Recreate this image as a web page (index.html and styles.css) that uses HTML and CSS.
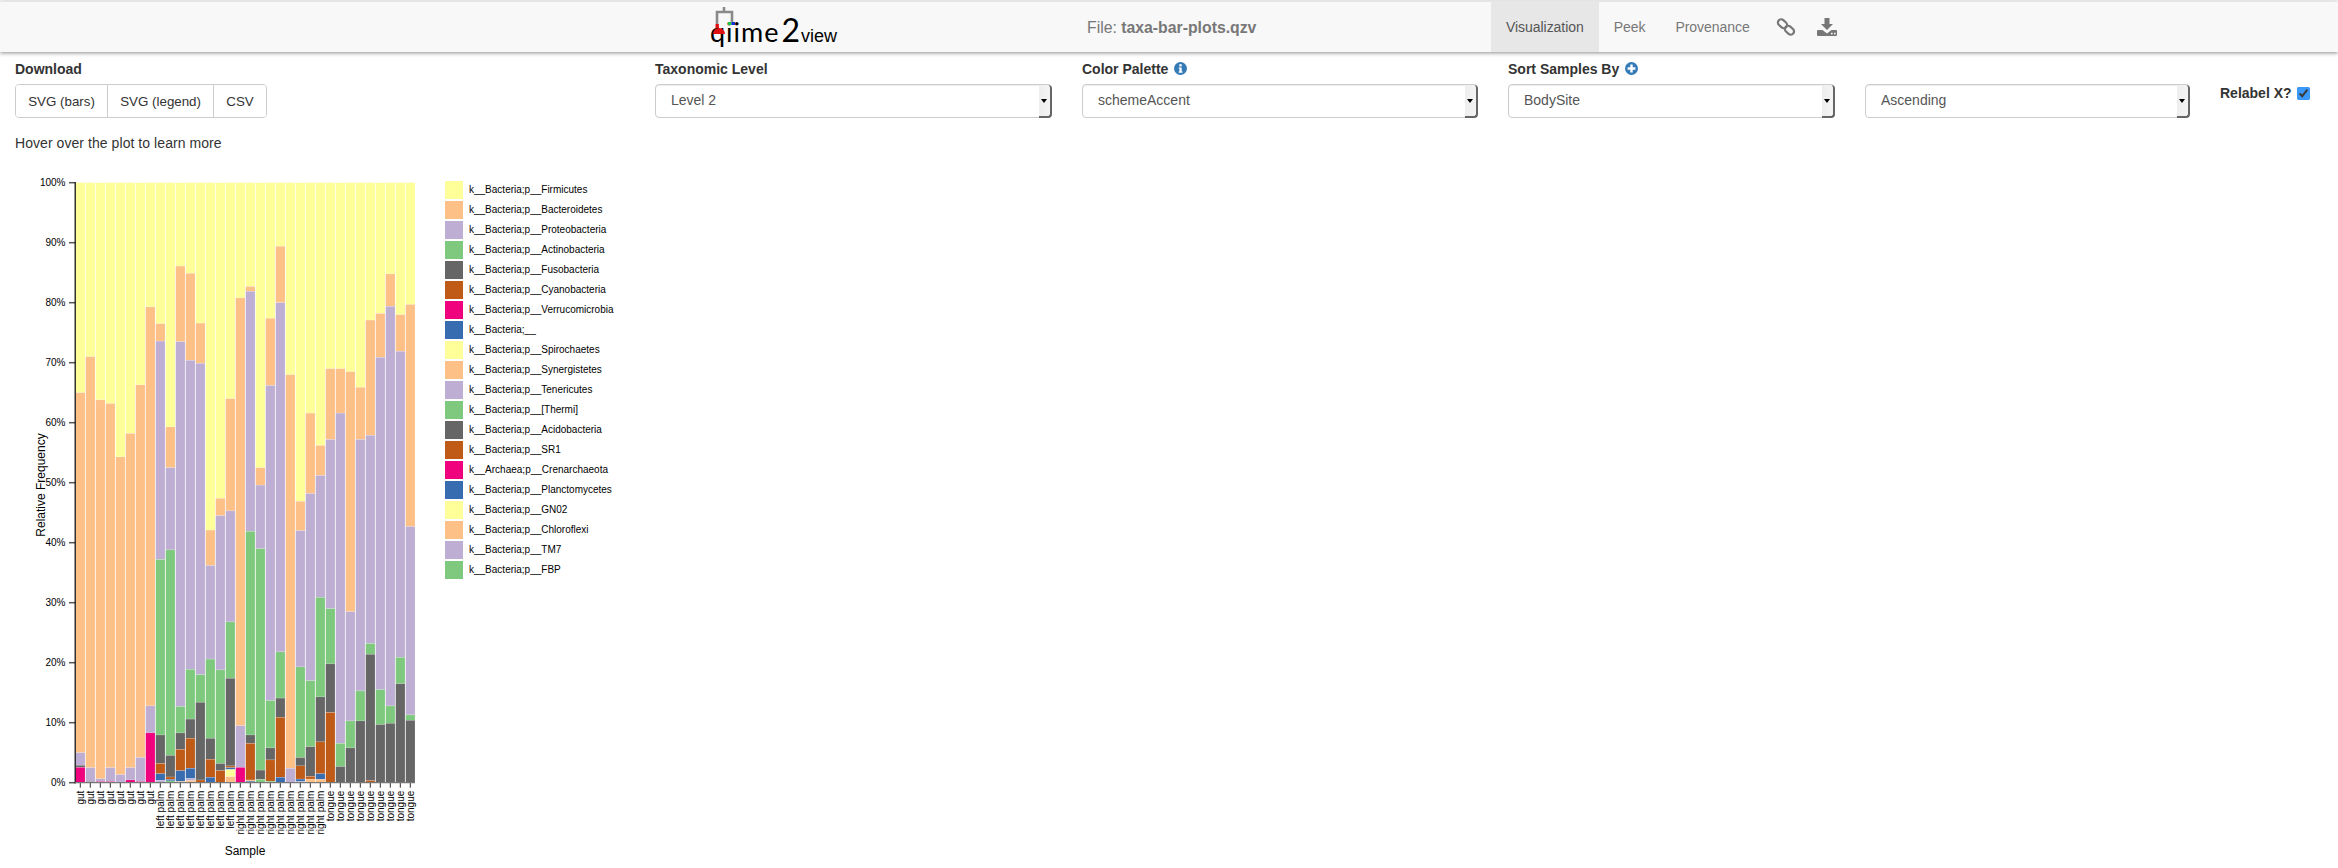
FILE: index.html
```html
<!DOCTYPE html>
<html lang="en">
<head>
    <meta charset="UTF-8">
    <title>taxa-bar-plots.qzv</title>
    <link rel="stylesheet" href="styles.css">
</head>
<body>
    <div class="navbar">
        <a class="brand" href="#">
            <span class="brand-name">qiime</span><span class="brand-two">2</span><span class="brand-view">view</span>
            <svg class="brand-tree" width="40" height="36" viewBox="0 0 40 36">
                <path d="M15 3V8M8 20V8H23V18" fill="none" stroke="#8a8a8a" stroke-width="2.6"/>
                <rect x="6.5" y="20" width="3.4" height="4" fill="#e01010"/>
                <rect x="19" y="18" width="3.5" height="3" fill="#22c04a"/>
                <rect x="22.5" y="18" width="3.5" height="3" fill="#1030d0"/>
                <path d="M4 30a6 6 0 0 1 12 0z" fill="#e01010"/>
            </svg>
        </a>
        <div class="file-name">File: <b>taxa-bar-plots.qzv</b></div>
        <ul class="tabs">
            <li class="active"><a href="#">Visualization</a></li>
            <li><a href="#">Peek</a></li>
            <li><a href="#">Provenance</a></li>
            <li class="icon-tab">
                <svg width="20" height="20" viewBox="0 0 20 20">
                    <g fill="none" stroke="#777" stroke-width="2.2">
                        <rect x="1.5" y="3.5" width="10" height="6.5" rx="3.2" transform="rotate(42 6.5 6.7)"/>
                        <rect x="8.5" y="10" width="10" height="6.5" rx="3.2" transform="rotate(42 13.5 13.2)"/>
                    </g>
                </svg>
            </li>
            <li class="icon-tab">
                <svg width="20" height="20" viewBox="0 0 20 20">
                    <path d="M7.5 1H12.5V7H16L10 13L4 7H7.5Z" fill="#777"/>
                    <path d="M1 13H5.5L10 16.5L14.5 13H19Q20 13 20 14V18Q20 19 19 19H1Q0 19 0 18V14Q0 13 1 13Z" fill="#777"/>
                    <rect x="14" y="15.8" width="1.6" height="1.6" fill="#f8f8f8"/>
                    <rect x="17" y="15.8" width="1.6" height="1.6" fill="#f8f8f8"/>
                </svg>
            </li>
        </ul>
    </div>

    <div class="controls">
        <div class="control">
            <label>Download</label>
            <div class="btn-group">
                <button>SVG (bars)</button>
                <button>SVG (legend)</button>
                <button>CSV</button>
            </div>
        </div>
        <div class="control">
            <label>Taxonomic Level</label>
            <div class="select-box">
                <select><option>Level 2</option></select>
            </div>
        </div>
        <div class="control">
            <label>Color Palette
                <svg class="help-icon" width="13" height="13" viewBox="0 0 13 13">
                    <circle cx="6.5" cy="6.5" r="6.5" fill="#337ab7"/>
                    <rect x="5.3" y="2.2" width="2.4" height="2.2" fill="#fff"/>
                    <path d="M4.6 5.4H7.7V9.6H8.5V10.8H4.6V9.6H5.4V6.6H4.6Z" fill="#fff"/>
                </svg>
            </label>
            <div class="select-box">
                <select><option>schemeAccent</option></select>
            </div>
        </div>
        <div class="control">
            <label>Sort Samples By
                <svg class="help-icon" width="13" height="13" viewBox="0 0 13 13">
                    <circle cx="6.5" cy="6.5" r="6.5" fill="#337ab7"/>
                    <path d="M5.3 2.6H7.7V5.3H10.4V7.7H7.7V10.4H5.3V7.7H2.6V5.3H5.3Z" fill="#fff"/>
                </svg>
            </label>
            <div class="select-box">
                <select><option>BodySite</option></select>
            </div>
        </div>
        <div class="control spacer">
            <div class="select-box">
                <select><option>Ascending</option></select>
            </div>
        </div>
        <div class="control relabel">
            <label>Relabel X? <input type="checkbox" checked></label>
        </div>
    </div>

    <p class="hint">Hover over the plot to learn more</p>

    <div class="plot">
        <svg id="bars" width="440" height="703"></svg>
        <ul class="legend" id="legend"></ul>
    </div>

    <script src="script.js"></script>
</body>
</html>
```

FILE: styles.css
```css
body {
    font-family: "Liberation Sans", Arial, sans-serif;
    font-size: 14px;
    line-height: 20px;
    color: #333;
    margin: 0;
    padding: 0;
    background-color: #fff;
}

.navbar {
    height: 51px;
    margin-top: 1px;
    background: #f8f8f8;
    border-top: 1px solid #e7e7e7;
    box-sizing: border-box;
    box-shadow: 0 1px 4px rgba(0, 0, 0, 0.45);
    display: flex;
    align-items: center;
}

.brand {
    position: relative;
    display: flex;
    align-items: baseline;
    box-sizing: border-box;
    width: 127px;
    height: 46px;
    margin-left: 709px;
    padding: 6px 0 0 1px;
    color: #000;
    text-decoration: none;
}

.brand-name {
    font-family: "Lato", sans-serif;
    font-weight: 400;
    font-size: 27px;
    line-height: 40px;
    letter-spacing: 1px;
}

.brand-two {
    font-family: "Lato", sans-serif;
    font-weight: 400;
    font-size: 32px;
    line-height: 40px;
    margin-left: 2px;
}

.brand-view {
    font-size: 18px;
    line-height: 20px;
    margin-left: 1px;
}

.brand-tree {
    position: absolute;
    left: 0;
    top: 0;
}

.file-name {
    margin-left: 251px;
    padding-top: 2px;
    width: 404px;
    font-size: 15.8px;
    color: #777;
}

.tabs {
    list-style-type: none;
    margin: 0;
    padding: 0;
    display: flex;
    height: 50px;
    letter-spacing: -0.05px;
}

.tabs li {
    display: flex;
    align-items: center;
}

.tabs a {
    color: #777;
    text-decoration: none;
    padding: 0 15px;
    line-height: 50px;
}

.tabs .active {
    background: #e7e7e7;
}

.tabs .active a {
    color: #555;
}

.icon-tab {
    padding: 0 10px;
}

.icon-tab:nth-child(4) {
    padding-left: 11px;
    padding-right: 11px;
}

.controls {
    display: grid;
    grid-template-columns: 640px 427px 426px 357px 355px 133px;
    padding-top: 7px;
}

.control {
    padding: 0 15px;
    box-sizing: border-box;
}

.control label {
    display: block;
    font-weight: bold;
    margin-bottom: 5px;
}

.help-icon {
    margin-left: 2px;
    vertical-align: -1px;
}

.spacer {
    padding-top: 25px;
}

.relabel {
    padding-top: 24px;
    white-space: nowrap;
}

.relabel input {
    width: 13px;
    height: 13px;
    margin: 0 0 0 2px;
    vertical-align: -2px;
    accent-color: #3b99fc;
}

.btn-group {
    display: inline-flex;
    height: 34px;
    box-sizing: border-box;
    border: 1px solid #ccc;
    border-radius: 4px;
    overflow: hidden;
}

.btn-group button {
    font-family: inherit;
    font-size: 13.33px;
    color: #333;
    background: #fff;
    border: none;
    border-left: 1px solid #ccc;
    padding: 0 12.2px;
    cursor: pointer;
}

.btn-group button:first-child {
    border-left: none;
}

.select-box {
    position: relative;
    height: 34px;
}

.select-box select {
    display: block;
    width: 100%;
    height: 34px;
    box-sizing: border-box;
    font-family: inherit;
    font-size: 14px;
    color: #555;
    background: #fff;
    border: 1px solid #ccc;
    border-radius: 4px;
    padding: 0 15px 2px;
    appearance: none;
    box-shadow: inset 0 1px 1px rgba(0, 0, 0, 0.075);
}

/* the old mac style handle on the right of each select */
.select-box::after {
    content: "";
    position: absolute;
    top: 1px;
    right: 0;
    bottom: 0;
    width: 13px;
    background: linear-gradient(to right, #eee, #f4f4f4);
    border-right: 2px solid #666;
    border-bottom: 2px solid #666;
    border-radius: 0 4px 4px 0;
    box-sizing: border-box;
}

.select-box::before {
    content: "";
    position: absolute;
    z-index: 1;
    top: 15px;
    right: 5px;
    border-left: 3px solid transparent;
    border-right: 3px solid transparent;
    border-top: 4px solid #000;
}

.hint {
    margin: 15px 0 12px 15px;
    letter-spacing: 0.06px;
}

.plot {
    display: flex;
    align-items: flex-start;
}

#bars {
    display: block;
    flex-shrink: 0;
}

#bars text {
    font-family: "Liberation Sans", Arial, sans-serif;
    font-size: 10px;
    fill: #000;
}

#bars .axis-title {
    font-size: 12px;
}

.legend {
    list-style-type: none;
    margin: 16px 0 0 5px;
    padding: 0;
}

.legend li {
    display: flex;
    align-items: center;
    height: 18px;
    margin-bottom: 2px;
    font-size: 10px;
    color: #000;
}

.swatch {
    width: 18px;
    height: 18px;
    margin-right: 6px;
}
```

FILE: script.js
```javascript
const colors = {
    y: '#ffff99',
    o: '#fdc086',
    p: '#beaed4',
    g: '#7fc97f',
    k: '#666666',
    b: '#bf5b17',
    m: '#f0027f',
    l: '#386cb0'
};

// each bar: colour key + top of that segment in %, top to bottom. yellow fills the rest
const bars = [
    ['gut', 'o65 p5 k2.9 m2.55'],
    ['gut', 'o71 p2.5 k.2'],
    ['gut', 'o63.8 p.65 m.2'],
    ['gut', 'o63.2 p2.5 m.2'],
    ['gut', 'o54.3 p1.35 k.1'],
    ['gut', 'o58.2 p2.5 m.45'],
    ['gut', 'o66.3 p4.2 m.2'],
    ['gut', 'o79.3 p12.8 m8.3'],
    ['left palm', 'o76.5 p73.6 g37.2 k7.95 b3.2 l1.5 p.4'],
    ['left palm', 'o59.3 p52.5 g38.8 k4.55 b.95 l.55 g.3'],
    ['left palm', 'o86.1 p73.5 g12.7 k8.3 b5.55 l2 o.2'],
    ['left palm', 'o84.9 p70.4 g18.9 k10.6 b7.4 l2.4 p.7 o.35'],
    ['left palm', 'o76.6 p69.9 g18 k13.4 b.45'],
    ['left palm', 'o42.1 p36.2 g20.6 k7.4 b3.9 l.9'],
    ['left palm', 'o47.4 p44.5 g18.8 k3.2 b2'],
    ['left palm', 'o64 p45.3 g26.8 k17.4 b2.8 l2.5 y2.2 o1'],
    ['right palm', 'o80.8 p9.5 m2.55'],
    ['right palm', 'o82.7 p81.9 g41.9 k7.95 b6.55 o.45 l.25'],
    ['right palm', 'o52.5 p49.6 g39 k2.1 g.55'],
    ['right palm', 'o77.4 p66.2 g13.7 k5.8 b3.8 g.25'],
    ['right palm', 'o89.4 p80 g21.8 k14.1 b10.9 l.9'],
    ['right palm', 'o68 p2.4'],
    ['right palm', 'o46.9 p42 g19.3 k4.2 b2.8 l.6 p.2'],
    ['right palm', 'o61.6 p48.2 g17 k6 b1.05 o.6'],
    ['right palm', 'o56.2 p51.2 g30.9 k14.3 b6.8 l1.5 o.55'],
    ['tongue', 'o69 p57.2 g29 k19.8 b11.7'],
    ['tongue', 'o69 p61.6 g6.55 k2.7'],
    ['tongue', 'o68.5 p28.5 g10.3 k5.8'],
    ['tongue', 'o65.9 p57.2 g15.3 k10.3'],
    ['tongue', 'o77.1 p57.9 g23.2 k21.4 b.35'],
    ['tongue', 'o78.2 p70.9 g15.5 k9.7'],
    ['tongue', 'o84.8 p79.4 g12.8 k9.9'],
    ['tongue', 'o78 p71.9 g20.9 k16.5'],
    ['tongue', 'o79.7 p42.7 g11.3 k10.4']
];

const legendNames = [
    'k__Bacteria;p__Firmicutes',
    'k__Bacteria;p__Bacteroidetes',
    'k__Bacteria;p__Proteobacteria',
    'k__Bacteria;p__Actinobacteria',
    'k__Bacteria;p__Fusobacteria',
    'k__Bacteria;p__Cyanobacteria',
    'k__Bacteria;p__Verrucomicrobia',
    'k__Bacteria;__',
    'k__Bacteria;p__Spirochaetes',
    'k__Bacteria;p__Synergistetes',
    'k__Bacteria;p__Tenericutes',
    'k__Bacteria;p__[Thermi]',
    'k__Bacteria;p__Acidobacteria',
    'k__Bacteria;p__SR1',
    'k__Archaea;p__Crenarchaeota',
    'k__Bacteria;p__Planctomycetes',
    'k__Bacteria;p__GN02',
    'k__Bacteria;p__Chloroflexi',
    'k__Bacteria;p__TM7',
    'k__Bacteria;p__FBP'
];
const legendOrder = 'yopgkbmlyopgkbmlyopg';

const svg = document.getElementById('bars');
const zeroY = 617.7;
const yPos = pct => zeroY - pct * 6;

function add(tag, attrs, text) {
    const el = document.createElementNS('http://www.w3.org/2000/svg', tag);
    for (const key in attrs) {
        el.setAttribute(key, attrs[key]);
    }
    if (text) {
        el.textContent = text;
    }
    svg.appendChild(el);
    return el;
}

bars.forEach(([name, spec], i) => {
    const x = 75.7 + i * 10;
    const parts = ('y100 ' + spec).split(' ').map(s => [s[0], parseFloat(s.slice(1))]);
    parts.forEach(([key, top], n) => {
        const bottom = n + 1 < parts.length ? parts[n + 1][1] : 0;
        add('rect', {
            x: x,
            y: yPos(top),
            width: 9.3,
            height: (top - bottom) * 6,
            fill: colors[key],
            stroke: 'rgba(255,255,255,0.3)',
            'stroke-width': 0.5
        });
    });
    const cx = x + 4.6;
    add('line', { x1: cx, x2: cx, y1: zeroY, y2: zeroY + 5, stroke: '#333' });
    add('text', {
        transform: `translate(${cx + 3.5},${zeroY + 8}) rotate(-90)`,
        'text-anchor': 'end'
    }, name);
});

for (let pct = 0; pct <= 100; pct += 10) {
    add('line', { x1: 69, x2: 75, y1: yPos(pct), y2: yPos(pct), stroke: '#555', 'stroke-width': 1.5 });
    add('text', { x: 65.5, y: yPos(pct) + 3.5, 'text-anchor': 'end' }, pct + '%');
}

add('line', { x1: 75.2, x2: 75.2, y1: yPos(100) - 0.7, y2: zeroY + 0.7, stroke: '#000', 'stroke-width': 1.2 });
add('line', { x1: 75, x2: 415, y1: zeroY, y2: zeroY, stroke: '#777', 'stroke-width': 1.2 });

add('text', {
    class: 'axis-title',
    transform: 'translate(45,320) rotate(-90)',
    'text-anchor': 'middle'
}, 'Relative Frequency');
add('text', { class: 'axis-title', x: 245, y: 690, 'text-anchor': 'middle' }, 'Sample');

const legend = document.getElementById('legend');
legendNames.forEach((name, i) => {
    const row = document.createElement('li');
    const swatch = document.createElement('span');
    swatch.className = 'swatch';
    swatch.style.backgroundColor = colors[legendOrder[i]];
    row.appendChild(swatch);
    row.appendChild(document.createTextNode(name));
    legend.appendChild(row);
});
```
